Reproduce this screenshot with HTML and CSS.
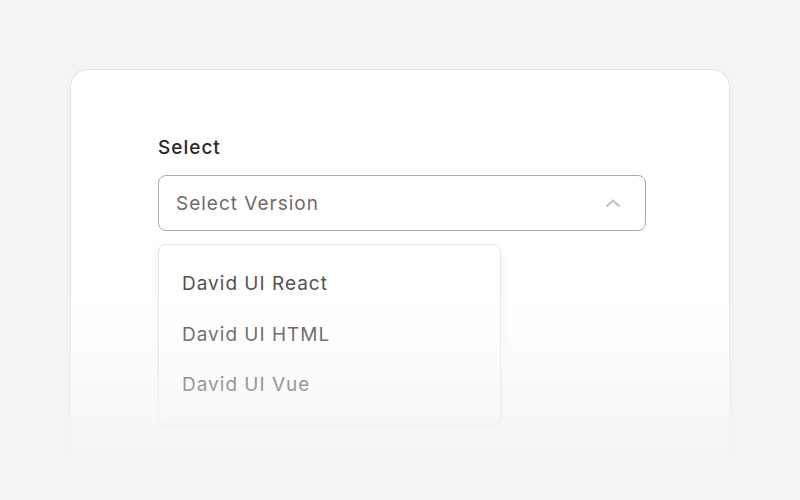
FILE: index.html
```html
<!DOCTYPE html>
<html>
<head>
<meta charset="utf-8">
<link rel="stylesheet" href="styles.css">
</head>
<body>
<div class="card">
  <div class="field">
    <label class="label">Select</label>
    <div class="select">
      <span class="placeholder">Select Version</span>
      <svg class="chevron" width="16" height="10" viewBox="0 0 16 10"><path d="M2 8 L8 2.5 L14 8" fill="none" stroke="#c6c2bf" stroke-width="2.2" stroke-linecap="round" stroke-linejoin="round"/></svg>
    </div>
    <ul class="menu">
      <li class="item">David UI React</li>
      <li class="item">David UI HTML</li>
      <li class="item">David UI Vue</li>
    </ul>
  </div>
</div>
<div class="fade"></div>
</body>
</html>
```
FILE: styles.css
```css
html, body {
  margin: 0;
  padding: 0;
}
body {
  background: #f4f4f4;
  font-family: Inter, "Noto Sans", sans-serif;
  letter-spacing: 1px;
  height: 500px;
  overflow: hidden;
  position: relative;
}
.card {
  margin: 69px 70px 0;
  height: 431px;
  background: #fff;
  border: 1px solid #e4e4e4;
  border-bottom: none;
  border-radius: 18px 18px 0 0;
  box-shadow: 0 1px 6px rgba(0,0,0,0.04);
  box-sizing: border-box;
  padding: 64px 0 0 87px;
}
.field {
  width: 488px;
}
.label {
  display: block;
  font-size: 19px;
  line-height: 28px;
  font-weight: 500;
  color: #2b2725;
  margin-bottom: 13px;
}
.select {
  height: 56px;
  box-sizing: border-box;
  border: 1.5px solid #aea9a6;
  border-radius: 8px;
  display: flex;
  align-items: center;
  justify-content: space-between;
  padding: 0 24px 0 17px;
}
.placeholder {
  font-size: 19px;
  color: #6f6a66;
}
.chevron {
  display: block;
}
.menu {
  list-style: none;
  margin: 13px 0 0;
  padding: 14px 0 13px;
  width: 343px;
  box-sizing: border-box;
  background: #fff;
  border: 1px solid #e6e6e6;
  border-radius: 8px;
  box-shadow: 0 2px 8px rgba(0,0,0,0.06);
}
.item {
  height: 50.5px;
  line-height: 50.5px;
  padding-left: 23px;
  font-size: 19px;
  font-weight: 400;
  color: #57514c;
}
.fade {
  position: absolute;
  left: 0;
  right: 0;
  top: 290px;
  height: 210px;
  background: linear-gradient(to bottom, rgba(244,244,244,0) 0%, rgba(244,244,244,0.35) 40%, rgba(244,244,244,0.9) 80%, #f4f4f4 88%, #f4f4f4 100%);
  pointer-events: none;
}
```
